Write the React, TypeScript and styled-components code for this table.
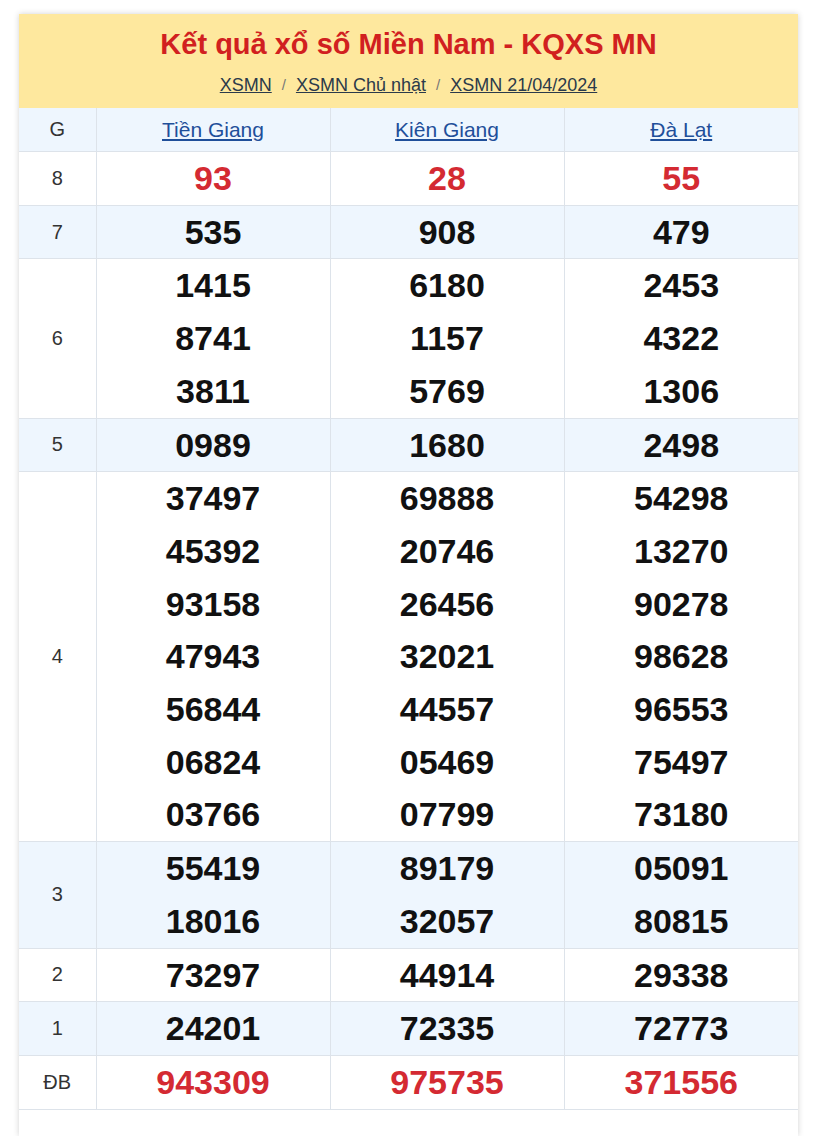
import React from "react";
import styled, { createGlobalStyle } from "styled-components";

const Global = createGlobalStyle`
  html, body { margin: 0; padding: 0; background: #fff; }
  body { font-family: "Liberation Sans", Arial, sans-serif; }
`;

const Page = styled.div`
  padding: 14px 22px 0 19px;
`;

const Card = styled.div`
  background: #fff;
  box-shadow: 0 0 6px rgba(0, 0, 0, 0.18);
  padding-bottom: 26px;
`;

const Header = styled.div`
  background: #fee89e;
  text-align: center;
  padding: 13px 0 0;
  height: 94px;
  box-sizing: border-box;
`;

const Title = styled.h1`
  margin: 0;
  color: #d1201f;
  font-size: 29px;
  font-weight: 700;
  line-height: 34px;
`;

const Crumbs = styled.div`
  margin-top: 14px;
  font-size: 18px;
  line-height: 20px;
  display: flex;
  justify-content: center;
  gap: 10px;
`;

const Crumb = styled.a`
  color: #2b3a4a;
  text-decoration: underline;
`;

const Sep = styled.span`
  color: #777;
  font-size: 15px;
`;

const Table = styled.table`
  width: 100%;
  border-collapse: collapse;
  table-layout: fixed;
`;

const Row = styled.tr<{ $alt?: boolean }>`
  background: ${(p) => (p.$alt ? "#eef6fe" : "#fff")};
  border-bottom: 1px solid #dde3ea;
`;

const HeadCell = styled.th`
  font-weight: 400;
  font-size: 21px;
  height: 43px;
  padding: 0;
  border-left: 1px solid #dde3ea;
  &:first-child { border-left: none; color: #333; font-size: 20px; }
`;

const ProvLink = styled.a`
  color: #1f4f9a;
  text-decoration: underline;
`;

const LabelCell = styled.td`
  text-align: center;
  font-size: 20px;
  color: #333;
  padding: 0;
`;

const NumCell = styled.td`
  text-align: center;
  border-left: 1px solid #dde3ea;
  padding: 0;
`;

const Num = styled.div<{ $red?: boolean }>`
  font-size: 34px;
  font-weight: 700;
  line-height: 52.7px;
  color: ${(p) => (p.$red ? "#d42a32" : "#111")};
`;

type Prize = { label: string; red?: boolean; values: string[][] };

const prizes: Prize[] = [
  { label: "8", red: true, values: [["93"], ["28"], ["55"]] },
  { label: "7", values: [["535"], ["908"], ["479"]] },
  {
    label: "6",
    values: [
      ["1415", "8741", "3811"],
      ["6180", "1157", "5769"],
      ["2453", "4322", "1306"],
    ],
  },
  { label: "5", values: [["0989"], ["1680"], ["2498"]] },
  {
    label: "4",
    values: [
      ["37497", "45392", "93158", "47943", "56844", "06824", "03766"],
      ["69888", "20746", "26456", "32021", "44557", "05469", "07799"],
      ["54298", "13270", "90278", "98628", "96553", "75497", "73180"],
    ],
  },
  {
    label: "3",
    values: [
      ["55419", "18016"],
      ["89179", "32057"],
      ["05091", "80815"],
    ],
  },
  { label: "2", values: [["73297"], ["44914"], ["29338"]] },
  { label: "1", values: [["24201"], ["72335"], ["72773"]] },
  { label: "ĐB", red: true, values: [["943309"], ["975735"], ["371556"]] },
];

const provinces = ["Tiền Giang", "Kiên Giang", "Đà Lạt"];

export default function App() {
  return (
    <>
      <Global />
      <Page>
        <Card>
          <Header>
            <Title>Kết quả xổ số Miền Nam - KQXS MN</Title>
            <Crumbs>
              <Crumb href="#">XSMN</Crumb>
              <Sep>/</Sep>
              <Crumb href="#">XSMN Chủ nhật</Crumb>
              <Sep>/</Sep>
              <Crumb href="#">XSMN 21/04/2024</Crumb>
            </Crumbs>
          </Header>
          <Table>
            <colgroup>
              <col style={{ width: 77 }} />
              <col />
              <col />
              <col />
            </colgroup>
            <thead>
              <Row $alt>
                <HeadCell>G</HeadCell>
                {provinces.map((p) => (
                  <HeadCell key={p}>
                    <ProvLink href="#">{p}</ProvLink>
                  </HeadCell>
                ))}
              </Row>
            </thead>
            <tbody>
              {prizes.map((pr, i) => (
                <Row key={pr.label} $alt={i % 2 === 1}>
                  <LabelCell>{pr.label}</LabelCell>
                  {pr.values.map((col, j) => (
                    <NumCell key={j}>
                      {col.map((v, k) => (
                        <Num key={k} $red={pr.red}>
                          {v}
                        </Num>
                      ))}
                    </NumCell>
                  ))}
                </Row>
              ))}
            </tbody>
          </Table>
        </Card>
      </Page>
    </>
  );
}
